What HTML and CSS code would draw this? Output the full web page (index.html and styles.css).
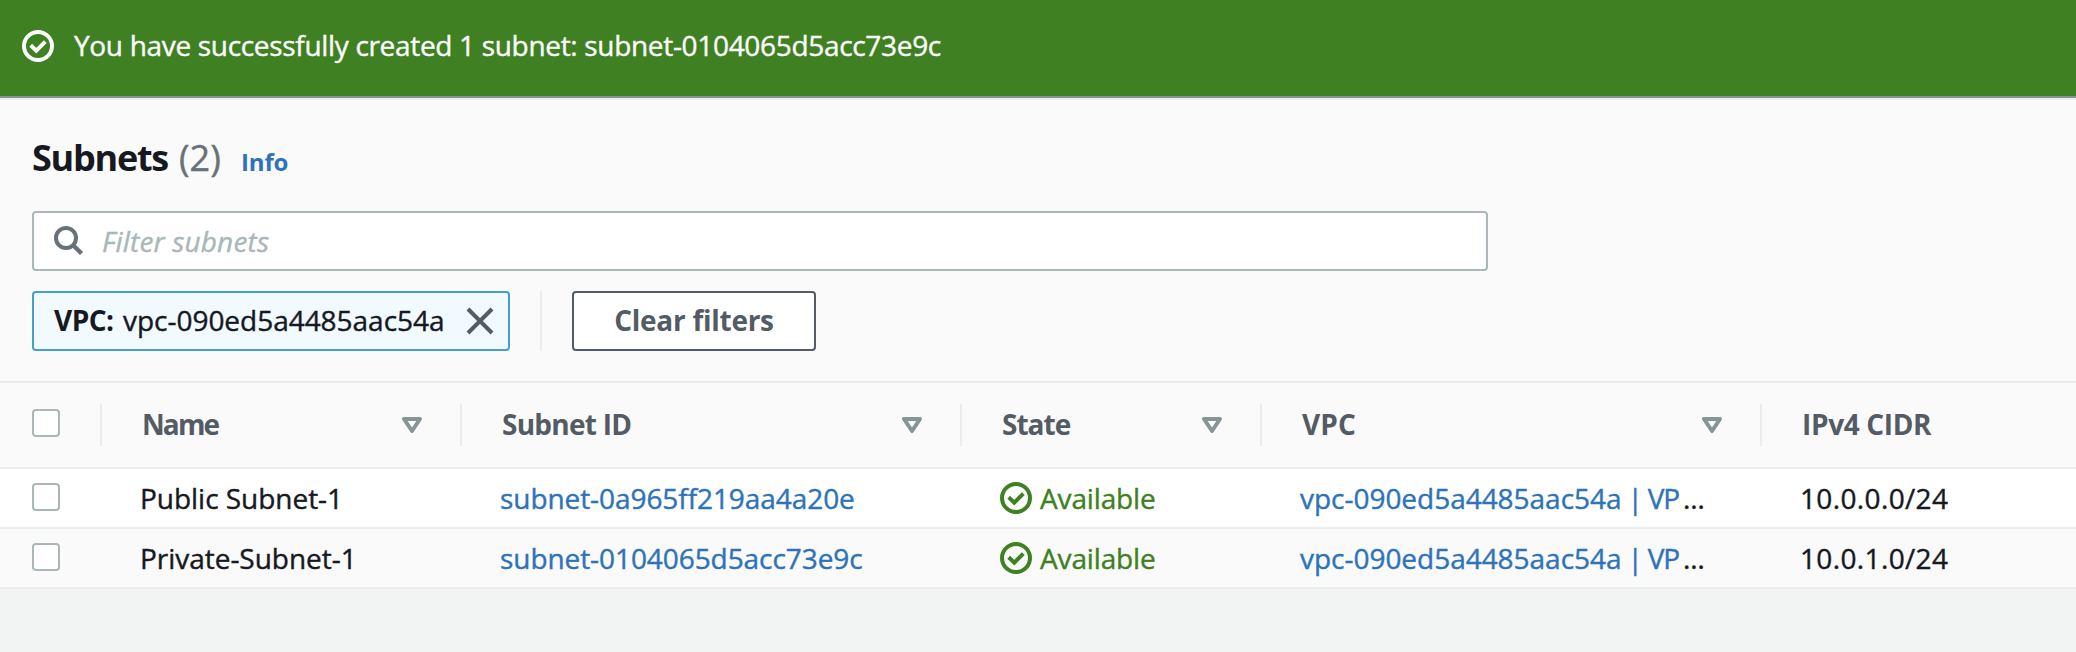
FILE: index.html
```
<!DOCTYPE html>
<html lang="en">
<head>
<meta charset="utf-8">
<title>Subnets</title>
<link rel="stylesheet" href="styles.css">
</head>
<body>
<svg class="defs" width="0" height="0" aria-hidden="true">
  <symbol id="icon-check" viewBox="0 0 32 32">
    <circle cx="16" cy="16" r="14" fill="none" stroke="currentColor" stroke-width="4"/>
    <path d="M8.7 15.3l5.6 5.3 9-9" fill="none" stroke="currentColor" stroke-width="4"/>
  </symbol>
  <symbol id="icon-sort" viewBox="0 0 20 16">
    <path d="M2 2h16l-8 12z" fill="none" stroke="currentColor" stroke-width="4" stroke-linejoin="round"/>
  </symbol>
</svg>

<div class="flash">
  <svg class="icon"><use href="#icon-check"/></svg>
  <span class="flash-text">You have successfully created 1 subnet: subnet-0104065d5acc73e9c</span>
</div>

<main class="panel">
  <header class="panel-header">
    <div class="title-row">
      <h1 class="title">Subnets</h1>
      <span class="count">(2)</span>
      <a class="info">Info</a>
    </div>
    <div class="search">
      <svg class="search-icon" viewBox="0 0 30 30"><circle cx="12" cy="12" r="10" fill="none" stroke="currentColor" stroke-width="4"/><path d="M18.7 18.7l8.8 8.8" stroke="currentColor" stroke-width="4.4"/></svg>
      <span class="placeholder">Filter subnets</span>
    </div>
    <div class="filters">
      <div class="token">
        <b class="token-key">VPC:</b>
        <span class="token-value">vpc-090ed5a4485aac54a</span>
        <svg class="close" viewBox="0 0 28 28"><path d="M2 2l24 24M26 2L2 26" stroke="currentColor" stroke-width="4"/></svg>
      </div>
      <div class="divider"></div>
      <button class="button"><span class="button-text">Clear filters</span></button>
    </div>
  </header>

  <div class="table">
    <div class="row head">
      <div class="cell select"><i class="checkbox"></i></div>
      <div class="cell"><span class="label h-name">Name</span><svg class="sort"><use href="#icon-sort"/></svg></div>
      <div class="cell"><span class="label h-id">Subnet ID</span><svg class="sort"><use href="#icon-sort"/></svg></div>
      <div class="cell"><span class="label h-state">State</span><svg class="sort"><use href="#icon-sort"/></svg></div>
      <div class="cell"><span class="label h-vpc">VPC</span><svg class="sort"><use href="#icon-sort"/></svg></div>
      <div class="cell"><span class="label h-cidr">IPv4 CIDR</span></div>
    </div>
    <div class="row">
      <div class="cell select"><i class="checkbox"></i></div>
      <div class="cell name">Public Subnet-1</div>
      <div class="cell"><a class="link">subnet-0a965ff219aa4a20e</a></div>
      <div class="cell status"><svg class="icon"><use href="#icon-check"/></svg><span>Available</span></div>
      <div class="cell"><a class="link vpc-link">vpc-090ed5a4485aac54a<span class="vpc-name"> | VP</span></a><span class="dots">…</span></div>
      <div class="cell cidr">10.0.0.0/24</div>
    </div>
    <div class="row alt">
      <div class="cell select"><i class="checkbox"></i></div>
      <div class="cell name">Private-Subnet-1</div>
      <div class="cell"><a class="link">subnet-0104065d5acc73e9c</a></div>
      <div class="cell status"><svg class="icon"><use href="#icon-check"/></svg><span>Available</span></div>
      <div class="cell"><a class="link vpc-link">vpc-090ed5a4485aac54a<span class="vpc-name"> | VP</span></a><span class="dots">…</span></div>
      <div class="cell cidr">10.0.1.0/24</div>
    </div>
  </div>
</main>
</body>
</html>
```
FILE: styles.css
```
* { box-sizing: border-box; }

body {
  margin: 0;
  background: #f2f3f3;
  color: #16191f;
  font: 28px/40px "Open Sans", "Noto Sans", sans-serif;
  -webkit-text-stroke: 0.4px currentColor;
  white-space: nowrap;
  overflow: hidden;
}

.defs { position: absolute; }
.icon { width: 32px; height: 32px; flex: none; }

/* Success banner */
.flash {
  display: flex;
  align-items: flex-start;
  height: 96px;
  padding: 30px 22px;
  gap: 20px;
  background: #3f8023;
  color: #fafafa;
}
.flash-text { margin-top: -5px; letter-spacing: -0.32px; }

/* Panel */
.panel {
  background: #fafafa;
  border-top: 2px solid #879196;
  box-shadow: inset 0 2px #eaeded;
}
.panel-header {
  display: flex;
  flex-direction: column;
  height: 283px;
  padding: 34px 32px 0;
}
.title-row {
  display: flex;
  align-items: baseline;
  height: 79px;
  line-height: 52px;
}
.title, .info, .token-key, .button, .head { -webkit-text-stroke: 0; }
.title {
  width: 147px;
  margin: 0;
  font-size: 36px;
  font-weight: 700;
  line-height: 52px;
  letter-spacing: -1.25px;
}
.count { width: 62px; font-size: 36px; color: #687078; }
.info {
  font-size: 24px;
  font-weight: 700;
  letter-spacing: -0.17px;
  color: #2e73b8;
}

.search {
  display: flex;
  align-items: center;
  flex: none;
  width: 1456px;
  height: 60px;
  padding-left: 20px;
  border: 2px solid #aab7b8;
  border-radius: 4px;
  background: #fff;
}
.search-icon { width: 30px; height: 30px; margin-right: 18px; color: #687078; }
.placeholder { font-style: italic; color: #aab7b8; letter-spacing: 0.17px; }

.filters { display: flex; height: 60px; margin-top: 20px; }
.token {
  display: flex;
  align-items: center;
  width: 478px;
  padding: 0 14px 0 20px;
  border: 2px solid #469fc8;
  border-radius: 4px;
  background: #f1faff;
}
.token-key, .token-value { padding-bottom: 2px; }
.token-key { width: 69px; letter-spacing: -0.54px; }
.token-value { letter-spacing: -0.03px; }
.close { width: 28px; height: 28px; margin-left: auto; color: #545b64; }
.divider { width: 2px; margin: 0 30px; background: #eaeded; }
.button {
  width: 244px;
  padding: 0 0 2px;
  border: 2px solid #545b64;
  border-radius: 4px;
  background: #fff;
  color: #545b64;
  font: inherit;
  font-weight: 700;
  letter-spacing: -0.28px;
}

/* Table */
.row {
  display: grid;
  grid-template-columns: 102px 360px 500px 300px 500px 1fr;
  height: 60px;
  border-bottom: 2px solid #eaeded;
  background: #fff;
}
.row.alt { background: #fafafa; }
.row.head {
  height: 88px;
  border-top: 2px solid #eaeded;
  background: #fafafa;
  color: #545b64;
  font-weight: 700;
}
.cell { display: flex; align-items: center; padding-left: 38px; }
.cell.select { padding-left: 32px; align-items: flex-start; padding-top: 14px; }
.head .cell {
  height: 42px;
  margin-top: 21px;
  border-right: 2px solid #eaeded;
  padding: 0 38px 0 40px;
  justify-content: space-between;
}
.head .cell.select { padding: 5px 0 0 32px; }
.head .cell:last-child { border-right: 0; }
.label { padding-bottom: 2px; }

.checkbox {
  width: 28px;
  height: 28px;
  border: 2px solid #aab7b8;
  border-radius: 4px;
  background: #fff;
}
.sort { width: 20px; height: 16px; color: #879596; }

.h-name { letter-spacing: -1.9px; }
.h-id { letter-spacing: -0.75px; }
.h-state { letter-spacing: -1px; }
.h-vpc { letter-spacing: 0.1px; }
.h-cidr { letter-spacing: -0.35px; }

.name { letter-spacing: -0.03px; }
.link { color: #2e73b8; letter-spacing: -0.07px; }
.status { color: #3f8023; gap: 8px; letter-spacing: -0.14px; }
.vpc-link { letter-spacing: -0.03px; }
.vpc-name { letter-spacing: -1.2px; }
.dots { letter-spacing: 0.3px; margin-left: 4px; }
.cidr { letter-spacing: 0.36px; }
```
